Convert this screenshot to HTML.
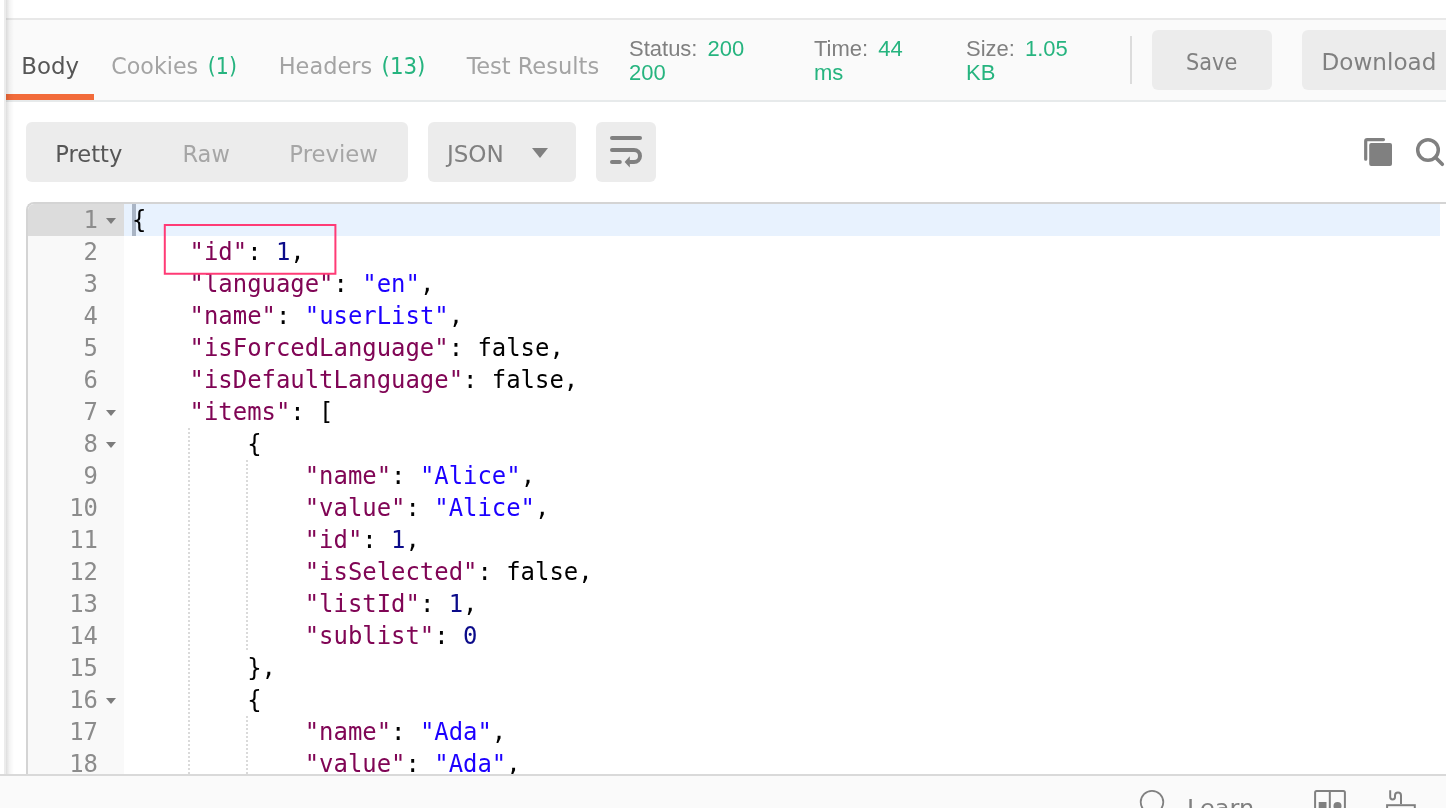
<!DOCTYPE html>
<html><head><meta charset="utf-8">
<style>
*{box-sizing:border-box;margin:0;padding:0}
html,body{width:1446px;height:808px;overflow:hidden;background:#fff}
body{position:relative;will-change:transform;font-family:"DejaVu Sans Condensed","Liberation Sans",sans-serif;color:#505050}
.abs{position:absolute}
#leftedge{left:4px;top:0;width:2px;height:774px;background:#ececec}
#leftshadow{left:6px;top:0;width:8px;height:774px;z-index:20;background:linear-gradient(to right,rgba(0,0,0,0.13),rgba(0,0,0,0.045) 45%,rgba(0,0,0,0))}
#topline{left:6px;top:18px;width:1440px;height:2px;background:#e8e8e8}
#tabbar{left:6px;top:20px;width:1440px;height:80px;background:#fafafa}
#tabline{left:6px;top:100px;width:1440px;height:2px;background:#e7eaeb}
#orange{left:6px;top:94px;width:88px;height:6px;background:#f26b3a}
.tab{top:50px;font-size:24px;line-height:30px;white-space:nowrap;color:#a0a0a0}
.tab.active{color:#505050}
.t{font-size:23.800px;line-height:30px;white-space:nowrap;color:#a4a4a4;transform-origin:0 0;left:0;top:0}
.g{color:#26b47f}
/*POS*/
#tBody{transform:translate(21.36px,50.90px) scaleX(1.0692)}
#tCookies{transform:translate(111.26px,50.90px) scaleX(1.0366)}
#tC1{transform:translate(207.82px,50.90px) scaleX(0.9614)}
#tHeaders{transform:translate(278.70px,50.90px) scaleX(1.0484)}
#tH13{transform:translate(381.55px,50.90px) scaleX(0.9988)}
#tTest{transform:translate(466.65px,50.90px) scaleX(1.0540)}
#tSave{transform:translate(1186.02px,46.90px) scaleX(0.9765)}
#tDownload{transform:translate(1321.54px,46.90px) scaleX(1.0791)}
#tPretty{transform:translate(55.29px,138.90px) scaleX(1.0574)}
#tRaw{transform:translate(182.50px,138.90px) scaleX(1.0520)}
#tPreview{transform:translate(289.37px,138.90px) scaleX(1.0643)}
#tJSON{transform:translate(446.88px,138.90px) scaleX(1.0788)}
#tLearn{transform:translate(1186.95px,793.00px) scaleX(1.1247)}
/*ENDPOS*/
.stat{font-family:"Liberation Sans",sans-serif;font-size:22px;line-height:24px;color:#808080;top:37px;white-space:nowrap}
.btn{background:#ececec;border-radius:6px;color:#808080;font-size:24px;text-align:center;white-space:nowrap}
#vdiv{left:1130px;top:36px;width:2px;height:48px;background:#dcdcdc}
#seg{left:26px;top:122px;width:382px;height:60px;background:#ececec;border-radius:6px}
#json{left:428px;top:122px;width:148px;height:60px;background:#ececec;border-radius:6px}
#wrap{left:596px;top:122px;width:60px;height:60px;background:#ececec;border-radius:6px}
.segt{top:138px;font-size:24px;line-height:30px;color:#a6a6a6;white-space:nowrap}
#editor{left:26px;top:202px;width:1420px;height:572px;border-top:2px solid #d4d4d4;border-left:2px solid #d4d4d4;border-top-left-radius:8px;overflow:hidden;background:#fff}
#gutter{left:0;top:0;width:96px;height:572px;background:#f9f9f9}
#gl1{left:0;top:0;width:96px;height:32px;background:#dcdcdc}
#hl{left:96px;top:0;width:1316px;height:32px;background:#e8f2fe}
#cursor{left:104px;top:0px;width:4px;height:32px;background:#a9b4c4}
.ln{left:0;width:70px;text-align:right;font-family:"DejaVu Sans Mono","Liberation Mono",monospace;font-size:23.9px;line-height:32px;height:32px;color:#8c8c8c}
.fold{width:0;height:0;border-left:5.2px solid transparent;border-right:5.2px solid transparent;border-top:6px solid #7c7c7c}
.cl{left:104px;font-family:"DejaVu Sans Mono","Liberation Mono",monospace;font-size:23.92px;line-height:32px;height:32px;white-space:pre;color:#000}
.k{color:#800555}.s{color:#1c00ff}.n{color:#0b0b8a}
.guide{width:2px;background:repeating-linear-gradient(to bottom,#dadada 0,#dadada 2px,transparent 2px,transparent 4px)}
#pink{left:160px;top:222px;z-index:5}
#bottombar{left:0;top:774px;width:1446px;height:34px;background:#fafafa;border-top:2px solid #d9d9d9}
</style></head><body>
<div class="abs" id="leftedge"></div>
<div class="abs" id="leftshadow"></div>
<div class="abs" id="topline"></div>
<div class="abs" id="tabbar"></div>
<div class="abs" id="tabline"></div>
<div class="abs" id="orange"></div>
<span class="abs t tx" id="tBody" style="color:#565656">Body</span>
<span class="abs t tx" id="tCookies">Cookies</span>
<span class="abs t tx g" id="tC1">(1)</span>
<span class="abs t tx" id="tHeaders">Headers</span>
<span class="abs t tx g" id="tH13">(13)</span>
<span class="abs t tx" id="tTest">Test Results</span>
<div class="abs stat" style="left:629px">Status:<span class="g" style="margin-left:10px">200<br>200</span></div>
<div class="abs stat" style="left:814px">Time:<span class="g" style="margin-left:10px">44<br>ms</span></div>
<div class="abs stat" style="left:966px">Size:<span class="g" style="margin-left:10px">1.05<br>KB</span></div>
<div class="abs" id="vdiv"></div>
<div class="abs btn" style="left:1152px;top:30px;width:120px;height:60px"></div>
<span class="abs t tx" id="tSave" style="color:#808080">Save</span>
<div class="abs btn" style="left:1302px;top:30px;width:160px;height:60px"></div>
<span class="abs t tx" id="tDownload" style="color:#808080">Download</span>
<div class="abs" id="seg"></div>
<span class="abs t tx" id="tPretty" style="color:#565656">Pretty</span>
<span class="abs t tx" id="tRaw" style="color:#a6a6a6">Raw</span>
<span class="abs t tx" id="tPreview" style="color:#a6a6a6">Preview</span>
<div class="abs" id="json"></div>
<span class="abs t tx" id="tJSON" style="color:#808080">JSON</span>
<div class="abs" style="left:532px;top:148px;width:0;height:0;border-left:8px solid transparent;border-right:8px solid transparent;border-top:10px solid #808080"></div>
<div class="abs" id="wrap"></div>
<svg class="abs" style="left:596px;top:122px" width="60" height="60" viewBox="0 0 60 60"><g fill="none" stroke="#808080" stroke-width="4" stroke-linecap="round"><path d="M16 16H44"/><path d="M16 28H38a6 6 0 0 1 0 12H34"/><path d="M16 40H23.800"/></g><path d="M28.600 40L33.800 34.300V45.500z" fill="#808080"/></svg>
<svg class="abs" style="left:1360px;top:134px" width="86" height="36" viewBox="0 0 86 36"><path d="M5.700 25.200V7.100a1.500 1.500 0 0 1 1.500-1.500H23.500" fill="none" stroke="#808080" stroke-width="3.200" stroke-linecap="round"/><rect x="9.200" y="9" width="22.800" height="23" rx="2" fill="#808080"/><circle cx="68" cy="16" r="10.300" fill="none" stroke="#808080" stroke-width="3.500"/><path d="M75.300 23.300L82.300 30.300" stroke="#808080" stroke-width="3.600" stroke-linecap="round"/></svg>
<div class="abs" id="editor">
<div class="abs" id="gutter"></div>
<div class="abs" id="gl1"></div>
<div class="abs" id="hl"></div>
<div class="abs" id="cursor"></div>
<div id="lines">
<div class="abs ln" style="top:0px">1</div>
<div class="abs fold" style="left:77.8px;top:13.8px"></div>
<div class="abs cl" style="top:0px">{</div>
<div class="abs ln" style="top:32px">2</div>
<div class="abs cl" style="top:32px">    <span class="k">"id"</span>: <span class="n">1</span>,</div>
<div class="abs ln" style="top:64px">3</div>
<div class="abs cl" style="top:64px">    <span class="k">"language"</span>: <span class="s">"en"</span>,</div>
<div class="abs ln" style="top:96px">4</div>
<div class="abs cl" style="top:96px">    <span class="k">"name"</span>: <span class="s">"userList"</span>,</div>
<div class="abs ln" style="top:128px">5</div>
<div class="abs cl" style="top:128px">    <span class="k">"isForcedLanguage"</span>: false,</div>
<div class="abs ln" style="top:160px">6</div>
<div class="abs cl" style="top:160px">    <span class="k">"isDefaultLanguage"</span>: false,</div>
<div class="abs ln" style="top:192px">7</div>
<div class="abs fold" style="left:77.8px;top:205.8px"></div>
<div class="abs cl" style="top:192px">    <span class="k">"items"</span>: [</div>
<div class="abs ln" style="top:224px">8</div>
<div class="abs fold" style="left:77.8px;top:237.8px"></div>
<div class="abs cl" style="top:224px">        {</div>
<div class="abs ln" style="top:256px">9</div>
<div class="abs cl" style="top:256px">            <span class="k">"name"</span>: <span class="s">"Alice"</span>,</div>
<div class="abs ln" style="top:288px">10</div>
<div class="abs cl" style="top:288px">            <span class="k">"value"</span>: <span class="s">"Alice"</span>,</div>
<div class="abs ln" style="top:320px">11</div>
<div class="abs cl" style="top:320px">            <span class="k">"id"</span>: <span class="n">1</span>,</div>
<div class="abs ln" style="top:352px">12</div>
<div class="abs cl" style="top:352px">            <span class="k">"isSelected"</span>: false,</div>
<div class="abs ln" style="top:384px">13</div>
<div class="abs cl" style="top:384px">            <span class="k">"listId"</span>: <span class="n">1</span>,</div>
<div class="abs ln" style="top:416px">14</div>
<div class="abs cl" style="top:416px">            <span class="k">"sublist"</span>: <span class="n">0</span></div>
<div class="abs ln" style="top:448px">15</div>
<div class="abs cl" style="top:448px">        },</div>
<div class="abs ln" style="top:480px">16</div>
<div class="abs fold" style="left:77.8px;top:493.8px"></div>
<div class="abs cl" style="top:480px">        {</div>
<div class="abs ln" style="top:512px">17</div>
<div class="abs cl" style="top:512px">            <span class="k">"name"</span>: <span class="s">"Ada"</span>,</div>
<div class="abs ln" style="top:544px">18</div>
<div class="abs cl" style="top:544px">            <span class="k">"value"</span>: <span class="s">"Ada"</span>,</div>
<div class="abs guide" style="left:160px;top:224px;height:352px"></div>
<div class="abs guide" style="left:218px;top:256px;height:192px"></div>
<div class="abs guide" style="left:218px;top:512px;height:64px"></div>
</div>
</div>
<svg class="abs" id="pink" width="180" height="56" viewBox="160 222 180 56"><rect x="164.800" y="225" width="170.600" height="48.750" fill="none" stroke="#ff3b76" stroke-width="2"/></svg>
<div class="abs" id="bottombar"></div>
<svg class="abs" style="left:1130px;top:776px" width="316" height="32" viewBox="1130 776 316 32"><g fill="none" stroke="#808080" stroke-width="2"><circle cx="1152" cy="802.100" r="11.300" stroke-width="1.800"/><rect x="1315.100" y="791.100" width="29.800" height="30" rx="1.500"/><path d="M1329.800 791V810"/><path d="M1390.200 790.200V797a2.400 2.400 0 0 0 4.800 0V795.500a3 3 0 0 1 6 0V804"/><rect x="1387.100" y="805.200" width="27.700" height="20"/></g><rect x="1318.700" y="802" width="7.800" height="8" fill="#808080"/><circle cx="1337.500" cy="806" r="4" fill="#808080"/></svg>
<span class="abs t tx" id="tLearn" style="color:#808080">Learn</span>
</body></html>
